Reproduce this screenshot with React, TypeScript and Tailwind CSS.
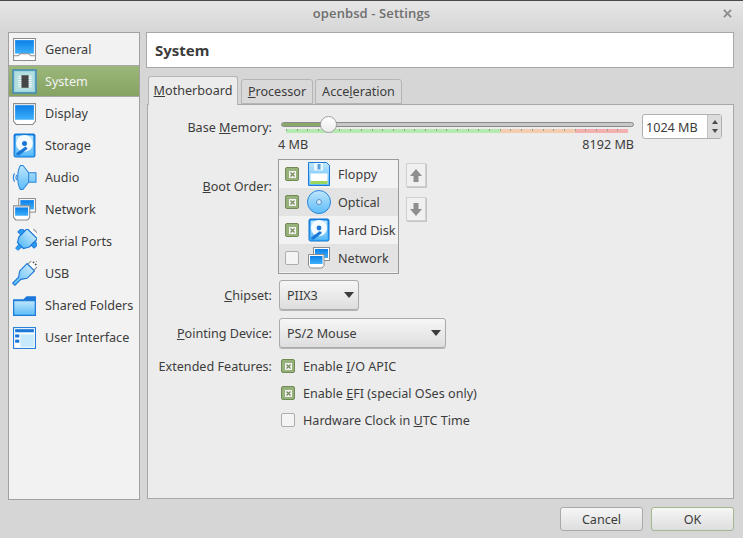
import React from 'react'

type IconProps = { className?: string }

const SharedDefs = () => (
  <svg width="0" height="0" className="absolute">
    <defs>
      <linearGradient id="blueFill" x1="0" y1="0" x2="0" y2="1">
        <stop offset="0" stopColor="#0a7fe8" />
        <stop offset="1" stopColor="#3fb0fa" />
      </linearGradient>
      <linearGradient id="paleFill" x1="0" y1="0" x2="0" y2="1">
        <stop offset="0" stopColor="#bfe6fc" />
        <stop offset="1" stopColor="#5cbcf8" />
      </linearGradient>
    </defs>
  </svg>
)

function MonitorIcon({ className }: IconProps) {
  return (
    <svg viewBox="0 0 24 24" className={className}>
      <path d="M1.500 2.500h21v17l-2.500 3H4l-2.500-3z" fill="#fff" stroke="#8c8c8c" />
      <rect x="3" y="4" width="18" height="14" fill="url(#blueFill)" />
    </svg>
  )
}

function GeneralIcon({ className }: IconProps) {
  return (
    <svg viewBox="0 0 24 24" className={className}>
      <path d="M1.500 1.500h21v21h-21z" fill="#fff" stroke="#8c8c8c" />
      <rect x="3" y="3" width="18" height="13" fill="url(#blueFill)" />
      <path d="M2 18h4l2-2h8l2 2h4" fill="none" stroke="#8c8c8c" />
    </svg>
  )
}

function SystemIcon({ className }: IconProps) {
  return (
    <svg viewBox="0 0 24 24" className={className}>
      <rect x="1" y="1" width="22" height="22" fill="#9ed3dc" stroke="#3d87b8" strokeWidth="1.400" />
      <rect x="3" y="3" width="18" height="18" fill="#b4dfe0" />
      <rect x="9" y="6" width="7" height="12" fill="#454545" />
      <path d="M6 7h3M6 9h3M6 11h3M6 13h3M6 15h3M6 17h3M16 7h3M16 9h3M16 11h3M16 13h3M16 15h3M16 17h3" stroke="#f2f2f2" strokeWidth="1" />
    </svg>
  )
}

function DiskIcon({ className }: IconProps) {
  return (
    <svg viewBox="0 0 24 24" className={className}>
      <rect x="2" y="1" width="20" height="22" rx="1.500" fill="url(#blueFill)" stroke="#1574d4" />
      <rect x="3.500" y="2.500" width="17" height="19" rx="1" fill="url(#paleFill)" />
      <circle cx="12" cy="10" r="8" fill="#f5fbff" />
      <circle cx="12" cy="10" r="2.400" fill="#1b78d8" />
      <path d="M4 19.500l9-6.500 2 2-8 6.500H4.500z" fill="#1b78d8" />
    </svg>
  )
}

function AudioIcon({ className }: IconProps) {
  return (
    <svg viewBox="0 0 24 24" className={className}>
      <path d="M2.500 8C1 10.500 1 13.500 2.500 16M4.500 9.500C3.700 11 3.700 13 4.500 14.500" fill="none" stroke="#2a86dc" strokeWidth="1.100" />
      <path d="M8 .5h2.500L16 7.500h7v9h-7L10.500 23.500H8C6 20 5.500 16 5.500 12S6 4 8 .5z" fill="url(#paleFill)" stroke="#2a86dc" />
      <path d="M16 7.500v9" stroke="#2a86dc" />
    </svg>
  )
}

function NetworkIcon({ className }: IconProps) {
  return (
    <svg viewBox="0 0 24 24" className={className}>
      <rect x="6.500" y="1.500" width="16" height="13" fill="#fff" stroke="#8c8c8c" />
      <rect x="8" y="3" width="13" height="9" fill="url(#blueFill)" />
      <path d="M1.500 8.500h15.500v11l-2 2.500H3.500l-2-2.500z" fill="#fff" stroke="#8c8c8c" />
      <rect x="3" y="10" width="12.500" height="8" fill="url(#blueFill)" />
    </svg>
  )
}

function SerialIcon({ className }: IconProps) {
  return (
    <svg viewBox="0 0 24 24" className={className}>
      <g transform="rotate(45 12 12)">
        <rect x="5.500" y="-2.500" width="13" height="4" fill="#fff" stroke="#8c8c8c" />
        <path d="M5 1.500h14v11l-3 5H8l-3-5z" fill="url(#paleFill)" stroke="#1b78d8" strokeWidth="1.200" />
        <rect x="1" y="5" width="4" height="5" fill="#2a9df0" stroke="#1b78d8" />
        <rect x="19" y="5" width="4" height="5" fill="#2a9df0" stroke="#1b78d8" />
        <path d="M10 17.500h4l-.5 5h-3z" fill="#2a9df0" stroke="#1b78d8" strokeWidth=".8" />
      </g>
    </svg>
  )
}

function UsbIcon({ className }: IconProps) {
  return (
    <svg viewBox="0 0 24 24" className={className}>
      <g transform="rotate(45 12 12)">
        <rect x="8" y="-4.500" width="8" height="8" fill="#fff" stroke="#8c8c8c" />
        <rect x="9.700" y="-2.500" width="1.600" height="1.600" fill="#555" />
        <rect x="12.700" y="-2.500" width="1.600" height="1.600" fill="#555" />
        <path d="M7 3.500h10v10l-3.500 5v8h-3v-8L7 13.500z" fill="url(#paleFill)" stroke="#1b78d8" strokeWidth="1.100" />
      </g>
    </svg>
  )
}

function FolderIcon({ className }: IconProps) {
  return (
    <svg viewBox="0 0 24 24" className={className}>
      <path d="M1 22V6h10l3-3h9v19z" fill="#1b78d8" />
      <path d="M1.700 21.300V7.500h20.600v13.800z" fill="url(#paleFill)" stroke="#1b78d8" />
    </svg>
  )
}

function WindowIcon({ className }: IconProps) {
  return (
    <svg viewBox="0 0 24 24" className={className}>
      <rect x="1.500" y="2.500" width="21" height="20" fill="#fff" stroke="#1b78d8" />
      <rect x="3" y="4" width="18" height="3" fill="#1b78d8" />
      <rect x="3" y="9" width="4" height="3" fill="#1b78d8" />
      <rect x="3" y="14" width="4" height="3" fill="#1b78d8" />
      <rect x="8" y="9" width="13" height="12" fill="#c6e9fb" />
    </svg>
  )
}

function FloppyIcon({ className }: IconProps) {
  return (
    <svg viewBox="0 0 24 24" className={className}>
      <path d="M1.500 .5h18l3 3v20h-21z" fill="url(#paleFill)" stroke="#1b78d8" />
      <rect x="7" y="1" width="9" height="7.500" fill="#e9f7ff" />
      <rect x="10.500" y="2" width="3" height="5.500" fill="#5a9fd8" />
      <rect x="3.500" y="11.500" width="17" height="10.500" fill="#fff" />
      <rect x="3.500" y="19" width="17" height="3" fill="#9bd65c" />
    </svg>
  )
}

function OpticalIcon({ className }: IconProps) {
  return (
    <svg viewBox="0 0 24 24" className={className}>
      <circle cx="12" cy="12" r="11.500" fill="url(#paleFill)" stroke="#2a86dc" />
      <circle cx="12" cy="12" r="2.500" fill="#d6eefb" stroke="#5a8fc8" />
    </svg>
  )
}

const CheckBox = ({ checked }: { checked?: boolean }) =>
  checked ? (
    <span className="w-[14px] h-[14px] rounded-[2px] border border-[#6f8a55] bg-[#97b17a] flex items-center justify-center shrink-0">
      <svg viewBox="0 0 7 7" className="w-[7px] h-[7px]">
        <rect width="7" height="7" fill="#f2f2f2" />
        <path d="M1.500 1.500l4 4M5.500 1.500l-4 4" stroke="#6f8a55" strokeWidth="1.200" />
      </svg>
    </span>
  ) : (
    <span className="w-[14px] h-[14px] rounded-[2px] border border-[#acacac] bg-[#f4f4f4] shrink-0" />
  )

const navItems = [
  { label: 'General', icon: GeneralIcon },
  { label: 'System', icon: SystemIcon, active: true },
  { label: 'Display', icon: MonitorIcon },
  { label: 'Storage', icon: DiskIcon },
  { label: 'Audio', icon: AudioIcon },
  { label: 'Network', icon: NetworkIcon },
  { label: 'Serial Ports', icon: SerialIcon },
  { label: 'USB', icon: UsbIcon },
  { label: 'Shared Folders', icon: FolderIcon },
  { label: 'User Interface', icon: WindowIcon },
]

const bootItems = [
  { label: 'Floppy', icon: FloppyIcon, checked: true },
  { label: 'Optical', icon: OpticalIcon, checked: true, alt: true },
  { label: 'Hard Disk', icon: DiskIcon, checked: true },
  { label: 'Network', icon: NetworkIcon, alt: true },
]

// 32 scale segments: 20 green, 7 orange, 5 red
const segments = Array.from({ length: 32 }, (_, i) =>
  i < 20 ? 'bg-[#b4eab0]' : i < 27 ? 'bg-[#f2cdb0]' : 'bg-[#f2b0ae]',
)

const Caret = () => (
  <svg viewBox="0 0 10 6" className="w-[10px] h-[6px]">
    <path d="M0 0h10L5 6z" fill="#3c3c3c" />
  </svg>
)

const selectClass =
  'h-[30px] rounded-[3px] border border-[#aaaaaa] bg-gradient-to-b from-[#f6f6f6] to-[#dedede] flex items-center justify-between pl-[7px] pr-[4px] shadow-[0_1px_0_#b5b5b5]'

function ArrowButton({ down }: { down?: boolean }) {
  return (
    <div className="w-[20px] h-[24px] border border-[#d0d0d0] bg-[#f0f0f0] shadow-[1px_1px_0_#c4c4c4] flex items-center justify-center">
      <svg viewBox="0 0 12 13" className="w-[12px] h-[13px]">
        <path d={down ? 'M3.500 0h5v6H12l-6 7-6-7h3.500z' : 'M3.500 13h5V7H12L6 0 0 7h3.500z'} fill="#8f8f8f" />
      </svg>
    </div>
  )
}

export default function App() {
  return (
    <div className="w-[743px] h-[538px] flex flex-col overflow-hidden bg-[#d6d6d6] text-[12.6px] leading-[18px] text-[#3c3c3c] font-['Noto_Sans',sans-serif]">
      <SharedDefs />
      {/* Title bar */}
      <div className="relative h-[32px] shrink-0 border-t border-[#4a4a4a] bg-gradient-to-b from-[#e6e6e6] to-[#d6d6d6] flex items-center justify-center">
        <span className="font-['Open_Sans',sans-serif] font-semibold text-[13px] tracking-[0.1px] text-[#6e6e6e] -mt-[8px]">openbsd - Settings</span>
        <svg viewBox="0 0 10 10" className="absolute right-[11px] top-[8px] w-[9px] h-[9px]">
          <path d="M1 1l8 8M9 1l-8 8" stroke="#8a8a8a" strokeWidth="2" />
        </svg>
      </div>

      <div className="flex h-[468px] shrink-0 pl-[8px] gap-[6px]">
        {/* Sidebar */}
        <div className="w-[132px] border border-[#a0a0a0] bg-[#f2f2f2]">
          {navItems.map(({ label, icon: Icon, active }) => (
            <div
              key={label}
              className={
                active
                  ? 'h-[32px] flex items-center gap-[8px] pl-[3px] bg-gradient-to-b from-[#9bb87a] to-[#86a363] border-y border-[#a8a8a8] text-[#f2f2f2]'
                  : 'h-[32px] flex items-center gap-[8px] pl-[3px]'
              }
            >
              <Icon className="w-[25px] h-[25px] shrink-0" />
              <span className="mt-[2px]">{label}</span>
            </div>
          ))}
        </div>

        {/* Right column */}
        <div className="w-[588px] flex flex-col">
          <div className="h-[36px] border border-[#a8a8a8] bg-white flex items-center pl-[8px] text-[15px] font-bold text-[#3c3c3c]">
            <span className="-mt-[1px]">System</span>
          </div>

          {/* Tabs */}
          <div className="h-[36px] flex items-end pl-[2px] relative z-10">
            <div className="w-[90px] h-[29px] -mb-[1px] rounded-t-[3px] border border-b-0 border-[#b5b5b5] bg-[#ececec] flex items-center justify-center">
              <span><span className="underline">M</span>otherboard</span>
            </div>
            <div className="ml-[3px] w-[72px] h-[25px] rounded-t-[3px] border border-[#b5b5b5] bg-[#d9d9d9] flex items-center justify-center">
              <span><span className="underline">P</span>rocessor</span>
            </div>
            <div className="ml-[2px] w-[87px] h-[25px] rounded-t-[3px] border border-[#b5b5b5] bg-[#d9d9d9] flex items-center justify-center">
              <span>Acce<span className="underline">l</span>eration</span>
            </div>
          </div>

          {/* Motherboard panel */}
          <div className="flex-1 ml-[1px] mb-[1px] border border-[#a8a8a8] bg-[#ececec] pt-[10px] pl-[10px]">
            <div className="grid grid-cols-[114px_1fr] gap-x-[7px]">
              <div className="text-right pt-[4px] whitespace-nowrap">
                Base <span className="underline">M</span>emory:
              </div>
              <div className="flex">
                <div className="w-[355px] pl-[2px] pt-[7px]">
                  <div className="relative h-[5px] w-[353px] rounded-full border border-[#8a8a8a] bg-[#c8c8c8]">
                    <div className="h-full w-[46px] rounded-full bg-[#8aa868]" />
                    <div className="absolute left-[38px] -top-[7px] w-[17px] h-[17px] rounded-full border border-[#a0a0a0] bg-gradient-to-b from-white to-[#ececec]" />
                  </div>
                  <div className="flex h-[4px] w-[342px] ml-[5px] mt-[2px]">
                    {segments.map((c, i) => (
                      <div key={i} className={'flex-1 ' + c}>
                        <div className="w-[1px] h-[2px] bg-[#8fa08f]" />
                      </div>
                    ))}
                  </div>
                  <div className="flex justify-between w-[356px] -ml-[3px] mt-[3px] -mb-[3px]">
                    <span>4 MB</span>
                    <span>8192 MB</span>
                  </div>
                </div>
                <div className="ml-[8px] -mt-[1px] w-[80px] h-[25px] flex rounded-[3px] border border-[#b0b0b0] bg-white">
                  <div className="flex-1 pl-[3px] pt-[2px] flex items-center">1024 MB</div>
                  <div className="w-[14px] flex flex-col items-center justify-around bg-[#dcdcdc] border-l border-[#c0c0c0] py-[3px]">
                    <svg viewBox="0 0 6 4" className="w-[6px] h-[4px]"><path d="M0 4h6L3 0z" fill="#4a4a4a" /></svg>
                    <svg viewBox="0 0 6 4" className="w-[6px] h-[4px]"><path d="M0 0h6L3 4z" fill="#4a4a4a" /></svg>
                  </div>
                </div>
              </div>

              <div className="text-right mt-[27px]">
                <span className="underline">B</span>oot Order:
              </div>
              <div className="flex mt-[8px] -ml-[1px]">
                <div className="w-[121px] h-[115px] border border-[#9a9a9a] bg-[#f2f2f2]">
                  {bootItems.map(({ label, icon: Icon, checked, alt }) => (
                    <div key={label} className={alt ? 'h-[28px] flex items-center pl-[6px] bg-[#e3e3e3]' : 'h-[28px] flex items-center pl-[6px]'}>
                      <CheckBox checked={checked} />
                      <Icon className="w-[24px] h-[24px] ml-[8px] mr-[7px] shrink-0" />
                      <span className="whitespace-nowrap mt-[2px]">{label}</span>
                    </div>
                  ))}
                </div>
                <div className="ml-[7px] mt-[4px] flex flex-col gap-[10px]">
                  <ArrowButton />
                  <ArrowButton down />
                </div>
              </div>

              <div className="text-right mt-[13px]">
                <span className="underline">C</span>hipset:
              </div>
              <div className={'mt-[6px] w-[80px] ' + selectClass}>
                <span className="mt-[2px]">PIIX3</span>
                <Caret />
              </div>

              <div className="text-right mt-[15px]">
                <span className="underline">P</span>ointing Device:
              </div>
              <div className={'mt-[8px] w-[167px] ' + selectClass}>
                <span className="mt-[2px]">PS/2 Mouse</span>
                <Caret />
              </div>

              <div className="text-right mt-[10px] whitespace-nowrap">Extended Features:</div>
              <div className="mt-[9px] flex flex-col gap-[9px] pl-[2px]">
                <div className="flex items-center gap-[8px] h-[18px]">
                  <CheckBox checked />
                  <span className="mt-[2px]">Enable <span className="underline">I</span>/O APIC</span>
                </div>
                <div className="flex items-center gap-[8px] h-[18px]">
                  <CheckBox checked />
                  <span className="mt-[2px]">Enable <span className="underline">E</span>FI (special OSes only)</span>
                </div>
                <div className="flex items-center gap-[8px] h-[18px]">
                  <CheckBox />
                  <span className="mt-[2px]">Hardware Clock in <span className="underline">U</span>TC Time</span>
                </div>
              </div>
            </div>
          </div>
        </div>
      </div>

      {/* Dialog buttons */}
      <div className="flex justify-end gap-[8px] pt-[7px] pr-[9px]">
        <button className="w-[83px] h-[24px] pt-[2px] rounded-[3px] border border-[#aaaaaa] bg-gradient-to-b from-[#f6f6f6] to-[#dedede]">Cancel</button>
        <button className="w-[83px] h-[24px] pt-[2px] rounded-[3px] border border-[#a3b890] bg-gradient-to-b from-[#f6f6f6] to-[#dedede]">OK</button>
      </div>
    </div>
  )
}
